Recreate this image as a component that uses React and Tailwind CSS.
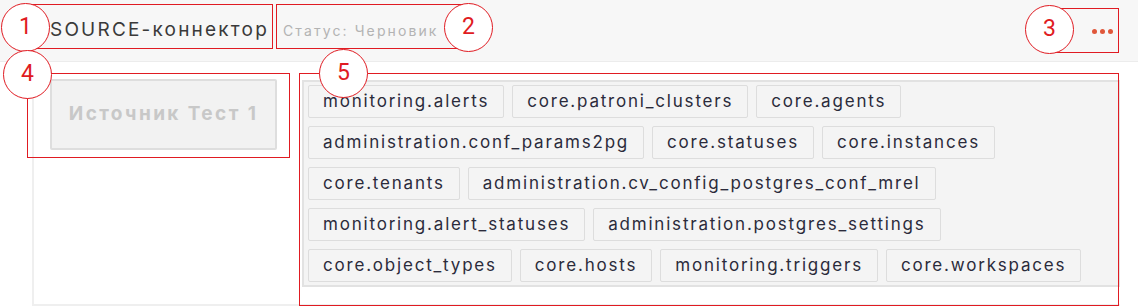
import React from "react";

const ROWS = [
  ["monitoring.alerts", "core.patroni_clusters", "core.agents"],
  ["administration.conf_params2pg", "core.statuses", "core.instances"],
  ["core.tenants", "administration.cv_config_postgres_conf_mrel"],
  ["monitoring.alert_statuses", "administration.postgres_settings"],
  ["core.object_types", "core.hosts", "monitoring.triggers", "core.workspaces"],
];

const MARKS = [
  { n: 1, box: "left-[25px] top-[4px] w-[248px] h-[45px]", dot: "left-[1px] top-[3px]" },
  { n: 2, box: "left-[276px] top-[4px] w-[192px] h-[45px]", dot: "left-[444px] top-[3px]" },
  { n: 3, box: "left-[1050px] top-[8px] w-[69px] h-[45px]", dot: "left-[1025px] top-[5px]" },
  { n: 4, box: "left-[27px] top-[73px] w-[263px] h-[85px]", dot: "left-[3px] top-[50px]" },
  { n: 5, box: "left-[299px] top-[73px] w-[820px] h-[233px]", dot: "left-[319px] top-[49px]" },
];

function Tag({ label }) {
  return (
    <span className="h-[33px] px-[14px] flex items-center bg-[#f4f4f4] border border-[#dddddd] rounded-[2px] text-[17px] tracking-[1.8px] text-[#2b2b3b] whitespace-nowrap">
      {label}
    </span>
  );
}

export default function App() {
  return (
    <div className="relative w-[1138px] h-[307px] bg-white overflow-hidden font-['Inter','Roboto',sans-serif]">
      {/* header */}
      <div className="h-[62px] bg-[#f7f7f7] border-b border-[#ececec] flex items-center pl-[50px] pr-[25px]">
        <span className="text-[19px] tracking-[2.2px] text-[#3a3a3a]">SOURCE-коннектор</span>
        <span className="ml-[14px] text-[14px] tracking-[2.1px] text-[#b3b3b3]">Статус: Черновик</span>
        <div className="ml-auto flex items-center gap-[3px] mt-[1px]">
          <span className="w-[5px] h-[5px] rounded-full bg-[#e0573a]" />
          <span className="w-[5px] h-[5px] rounded-full bg-[#e0573a]" />
          <span className="w-[5px] h-[5px] rounded-full bg-[#e0573a]" />
        </div>
      </div>

      {/* body */}
      <div className="ml-[32px] mr-[18px] h-[244px] border-l-2 border-b-2 border-[#efefef] flex items-start pt-[17px] pl-[16px]">
        <button
          disabled
          className="w-[227px] h-[71px] bg-[#f2f2f2] border-2 border-[#dedede] rounded-[2px] text-[19px] font-bold tracking-[2.4px] text-[#c8c8c8]"
        >
          Источник Тест 1
        </button>
        <div className="ml-[25px] w-[818px] h-[207px] mt-[1px] bg-[#f4f4f4] border-2 border-[#e2e2e2] px-[4px] pt-[3px] flex flex-col gap-[8px]">
          {ROWS.map((row, i) => (
            <div key={i} className="flex gap-[8px]">
              {row.map((t) => (
                <Tag key={t} label={t} />
              ))}
            </div>
          ))}
        </div>
      </div>

      {/* annotation overlay */}
      {MARKS.map((m) => (
        <div key={"b" + m.n} className={`absolute border border-[#e01b22] ${m.box}`} />
      ))}
      {MARKS.map((m) => (
        <div
          key={"c" + m.n}
          className={`absolute w-[49px] h-[49px] rounded-full border border-[#e01b22] bg-white flex items-center justify-center text-[23px] text-[#e01b22] font-['Roboto',sans-serif] ${m.dot}`}
        >
          {m.n}
        </div>
      ))}
    </div>
  );
}
